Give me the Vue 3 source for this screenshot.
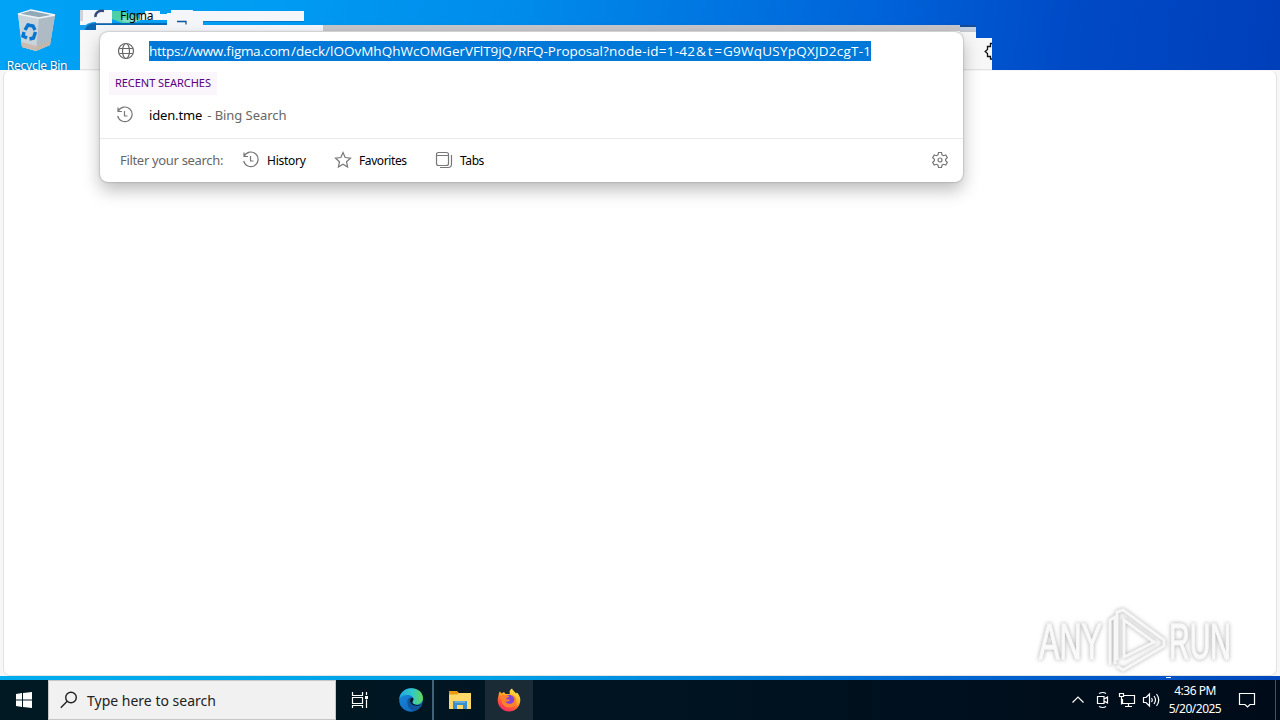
<template>
  <div class="screen">
    <main class="desktop">
      <div class="recycle">
        <svg width="40" height="44" viewBox="0 0 40 44">
          <path d="M1 5 14 1l24 5-5 30-14 6-14-4z" fill="#d5dde2" />
          <path d="M1 5 22 9l-3 33-14-4z" fill="#c8d3da" />
          <path d="M22 9 38 6l-5 30-14 6z" fill="#aebbc4" />
          <path d="M1 5 14 1l24 5-16 3z" fill="#8fa9b8" stroke="#f1f5f7" stroke-width="1.3" />
          <path d="m4.500 33 14.500 4 14.500-5-.5 4-14 6-14-4z" fill="#c9b5a4" opacity=".8" />
          <g fill="none" stroke="#0875d1" stroke-width="3.400">
            <path d="m8 21 3-5 5 1 2 4" />
            <path d="m18.500 23-2 6-4 1" />
            <path d="m10 29-4-2 1-4" />
          </g>
        </svg>
        <span>Recycle Bin</span>
      </div>

      <section class="page"><div class="page-body"></div></section>

      <div class="toolbar-left"></div>
      <div class="toolbar-step one"></div>
      <div class="toolbar-step two"></div>
      <div class="toolbar-right">
        <svg width="8" height="18" viewBox="0 0 8 18">
          <path d="M8 1.500H6.500V4.500H3.500V7.500L1.200 9.500l2.300 2v3h3v2.500H8" fill="none" stroke="#111" stroke-width="1.300" />
        </svg>
      </div>

      <div class="tab">
        <svg width="248" height="26" viewBox="0 0 248 26">
          <path d="M0 2h32v14H16v6H0zM65 3h15v3H65zM60 6h31v6H60zM91 2h22v1h111v10H123v9H87V5h4zM16 17h71v5H16z" fill="#f4f6f9" />
          <path d="M0 2h3v11H0z" fill="#cfd3d7" />
          <path d="M32 3h12l4 3h5l7 5v2h-5v2H42l-10-4z" fill="#4bd0ab" />
          <path d="M39 10h18v4H44z" fill="#79dbc9" />
          <path d="M16 16h71M97 13.500h9v3" fill="none" stroke="#0a56a0" stroke-width="1.300" />
          <path d="M123 13h101v1H123z" fill="#067cd0" />
          <path d="M15.500 9c-.5-4.500 3.500-7 8.500-6" fill="none" stroke="#344b79" stroke-width="2.500" />
          <path d="M0 17h6c1-1 4-3 10-3v8H0z" fill="#18a0ee" />
          <path d="M5 22c1-4 4-7 11-7v7z" fill="#0b66b4" />
        </svg>
        <span>Figma</span>
      </div>

      <section class="omnibox">
        <div class="address">
          <svg class="icon" viewBox="0 0 18 18">
            <g fill="none" stroke="#666" stroke-width="1.200">
              <circle cx="9" cy="9" r="7.500" />
              <ellipse cx="9" cy="9" rx="3.500" ry="7.500" />
              <path d="M2.200 6.500h13.600M2.200 11.500h13.600" />
            </g>
          </svg>
          <svg class="url" width="722" height="20" viewBox="0 0 722 20">
            <text
              v-for="part in urlParts"
              :key="part.x"
              :x="part.x"
              y="15"
              :textLength="part.width"
            >{{ part.text }}</text>
          </svg>
        </div>
        <div class="recent"><span>RECENT SEARCHES</span></div>
        <div class="suggestion">
          <svg class="icon" viewBox="0 0 18 18"><path :d="icons.history" /></svg>
          <span class="query">iden.tme</span>
          <span class="provider">- Bing Search</span>
        </div>
        <footer class="filters">
          <span class="filter-label">Filter your search:</span>
          <button v-for="filter in filters" :key="filter.name" :class="filter.icon">
            <svg class="icon" viewBox="0 0 18 18"><path :d="icons[filter.icon]" /></svg>
            <span>{{ filter.name }}</span>
          </button>
          <svg class="icon settings" viewBox="0 0 18 18">
            <path :d="icons.gear" />
            <circle cx="9" cy="9" r="2" />
          </svg>
        </footer>
      </section>

      <svg class="watermark" width="220" height="70" viewBox="0 0 220 70">
        <g class="mark">
          <text x="9" y="51" textLength="63" lengthAdjust="spacingAndGlyphs">ANY</text>
          <text x="139" y="51" textLength="62" lengthAdjust="spacingAndGlyphs">RUN</text>
          <path d="M80 57V12l5-3v47M87 52V4l6-2 41 30v6L93 62l-6-4M94 12v37l30-15z" />
        </g>
      </svg>
      <div class="edge-strip"><i></i></div>
    </main>

    <footer class="taskbar">
      <button class="start">
        <svg width="16" height="16" viewBox="0 0 16 16">
          <path d="m0 2 6-1v6.500H0zM7 1l9-1v7.500H7zM0 8.500h6V15l-6-1zM7 8.500h9V16l-9-1z" fill="#fff" />
        </svg>
      </button>
      <div class="search">
        <svg width="18" height="18" viewBox="0 0 18 18">
          <circle cx="11" cy="6.500" r="5.300" /><path d="M7.200 10.300.8 16.700" />
        </svg>
        <span>Type here to search</span>
      </div>
      <button class="tasks">
        <svg width="18" height="18" viewBox="0 0 18 18">
          <path d="M1.500 1v3.500h10V1M1.500 6.500h10v6h-10zM1.500 17v-2.500h10V17M15.500 1v3M15.500 8.500V17" fill="none" stroke="#fff" stroke-width="1.200" />
          <path d="M14 5h3v3h-3z" fill="#fff" />
        </svg>
      </button>
      <button class="edge">
        <svg width="24" height="24" viewBox="0 0 24 24">
          <defs>
            <linearGradient id="edgeTop" x2="1"><stop stop-color="#20a5dd" /><stop offset=".55" stop-color="#31c8ca" /><stop offset="1" stop-color="#63da54" /></linearGradient>
            <linearGradient id="edgeBase" y2="1"><stop stop-color="#188be0" /><stop offset="1" stop-color="#0e64b6" /></linearGradient>
          </defs>
          <circle cx="12" cy="12" r="11.800" fill="url(#edgeBase)" />
          <path d="M.3 11C1 4.500 6 .2 12.500.2 19 .2 24 4.500 24 10c0 4-3 6.500-6.500 6.500-2.500 0-4-1-4-2 0-.8 1-1.200 1-3C14.500 9 12 7 8.500 7 4.500 7 1.500 8.500.3 11z" fill="url(#edgeTop)" />
          <path d="M8.500 12c-1 5 2 10.500 7 11 3-.9 5.500-3 7-5.500-6 2.500-11.500-.5-11.500-5 0-1.500 1-2.500 2-3-2-.3-4 .5-4.500 2.500z" fill="#12539d" />
          <path d="M14.300 10.200c.5 2.300-1.800 3.300-.5 5 1.500 1.800 5.500 2.800 9.200.5-3 4-12 2.300-12-3 0-2.500 2.300-3.800 3.300-2.500z" fill="#041822" />
        </svg>
      </button>
      <button class="files">
        <svg width="22" height="18" viewBox="0 0 22 18">
          <path d="M0 0h8l2 2h12v4H0z" fill="#e99b14" />
          <path d="M0 3.500h8L10 2h12v16H0z" fill="#ffd869" />
          <path d="M4 10h14v8h-4v-4H8v4H4z" fill="#398ecb" />
          <path d="M5 10h12l-1 2H6z" fill="#62acd9" />
        </svg>
      </button>
      <button class="firefox">
        <svg width="24" height="24" viewBox="0 0 24 24">
          <defs>
            <linearGradient id="fox" x1=".8" x2=".25" y2="1"><stop stop-color="#fff04e" /><stop offset=".42" stop-color="#ffad25" /><stop offset=".7" stop-color="#ff553b" /><stop offset="1" stop-color="#ed286c" /></linearGradient>
          </defs>
          <path d="M1.500 8c0-2 .5-3.500 1.500-4.500l1.500 2L7 4l1.500 2H13c-1-2.500 0-4.500 2-5.500.5 2 3 3 4 5l1-1c2 2 3.500 5 3.300 8C23 19 18 23.500 12 23.500S.7 18.500.7 12.500c0-2 .3-3.500.8-4.500z" fill="url(#fox)" />
          <circle cx="12.500" cy="12" r="5.300" fill="#8044d8" />
          <path d="M5 7c3-1 4 1 7 1 0 2-3 1.500-3 3 2 1 3 0 4 1-1 2-4 2-5 1 2 4 8 3.500 9 0 1-3-1-5-3-6 4 0 6 4 5 8-2 6-11 6-14 0-1-3-1-6 0-8z" fill="#ff812d" />
        </svg>
      </button>
      <div class="tray">
        <svg class="chevron" width="14" height="16" viewBox="0 0 14 16"><path d="m1.500 10.500 5.500-5.500 5.500 5.500" /></svg>
        <svg class="camera" width="14" height="18" viewBox="0 0 14 18"><path d="M3 2.500q4-2 7 0M3 15.500q4 2 7 0M1.500 5.500h6.500v7H1.500zM8 8l3.500-2v6L8 10" /></svg>
        <svg class="network" width="18" height="16" viewBox="0 0 18 16"><path d="M6 3.500h10.500v8H4.500V7M1.500 1.500h4v3h-4zM3.500 4.500v8M10.500 11.500v3M7 14.500h7" /></svg>
        <svg class="sound" width="18" height="16" viewBox="0 0 18 16"><path d="M1.500 5.500h2.500L7.500 2v12L4 10.500H1.500zM9.500 6q1.500 2 0 4M12 4q3 4 0 8M14.500 2q4.500 6 0 12" /></svg>
        <div class="clock"><span>4:36 PM</span><span>5/20/2025</span></div>
        <svg class="notice" width="18" height="18" viewBox="0 0 18 18"><path d="M1.500 2.500h15v11H12L9.500 16 7 13.500H1.500z" /></svg>
        <i class="show-desktop"></i>
      </div>
    </footer>
  </div>
</template>

<script setup>
const urlParts = [
  { text: "https://www.figma.com", x: 0, width: 141 },
  { text: "/deck/", x: 142, width: 39 },
  { text: "lOOvMhQhWcOMGer", x: 181, width: 135 },
  { text: "VFlT9jQ", x: 316, width: 47 },
  { text: "/RFQ-Proposal", x: 364, width: 90 },
  { text: "?node-id=1-42", x: 454, width: 92 },
  { text: "&t=", x: 547, width: 26 },
  { text: "G9WqUSYpQXJD2cgT-1", x: 574, width: 148 },
];

const filters = [
  { name: "History", icon: "history" },
  { name: "Favorites", icon: "star" },
  { name: "Tabs", icon: "tabs" },
];

const icons = {
  history: "M2 1.500v4h4M2.300 5A7.300 7.300 0 1 1 1.700 10M8.500 5v5h3",
  star: "M9 1.500 11.200 6.500l5.300.6-4 3.600 1.100 5.300L9 13.300 4.400 16l1.100-5.300-4-3.600 5.300-.6z",
  tabs: "M3.500 1.500h8q2 0 2 2v9q0 2-2 2h-8q-2 0-2-2v-9q0-2 2-2M1.500 4.500h12M16.500 4v9q0 3.500-3.500 3.500H5",
  gear: "M7.500 1.500h3l.5 2.300 1.500.9 2.300-.7 1.500 2.600L14.600 8.200v1.600l1.700 1.600-1.500 2.600-2.300-.7-1.500.9-.5 2.300h-3L7 14.200l-1.500-.9-2.300.7-1.500-2.600 1.700-1.600V8.200L1.700 6.600 3.200 4l2.300.7L7 3.800z",
};
</script>

<style scoped>
.screen {
  width: 1280px;
  height: 720px;
  display: flex;
  flex-direction: column;
  overflow: hidden;
  font-family: "Noto Sans", "Open Sans", sans-serif;
}

.desktop {
  position: relative;
  height: 680px;
  background: linear-gradient(98deg, #00a3f5 0, #009df3 18%, #008bea 38%, #0063d9 64%, #004ac6 78%, #003ab5 100%);
}

button {
  display: flex;
  align-items: center;
  justify-content: center;
  padding: 0;
  border: none;
  background: transparent;
  font-family: inherit;
}

svg {
  display: block;
  flex-shrink: 0;
}

.recycle {
  position: absolute;
  left: 0;
  top: 9px;
  width: 74px;
  display: flex;
  flex-direction: column;
  align-items: center;
  color: white;
  font-size: 12px;
  line-height: 16px;
  letter-spacing: -0.25px;
  text-shadow: 0 1px 2px #004c86;
}

.recycle span {
  margin-top: 5px;
  white-space: nowrap;
}

.page {
  position: absolute;
  top: 70px;
  left: 0;
  width: 1280px;
  height: 606px;
  box-sizing: border-box;
  padding: 0 3px;
  background: #f7f7f7;
}

.page-body {
  height: 606px;
  box-sizing: border-box;
  border: 1px solid #e3e3e3;
  border-top-color: #f5f5f5;
  border-radius: 7px;
  background: white;
}

.edge-strip {
  position: absolute;
  left: 0;
  top: 676px;
  width: 1280px;
  height: 4px;
  background: linear-gradient(90deg, #00adef, #00a2e8 38%, #0069d4 72%, #0048bc);
}

.edge-strip i {
  display: block;
  width: 5px;
  height: 1px;
  margin: 1px 0 0 1166px;
  background: white;
}

.tab {
  position: absolute;
  left: 80px;
  top: 8px;
}

.tab span {
  position: absolute;
  left: 40px;
  top: 0;
  font-size: 12px;
  line-height: 16px;
  letter-spacing: -0.3px;
}

.toolbar-left {
  position: absolute;
  left: 80px;
  top: 25px;
  width: 880px;
  height: 45px;
  box-sizing: border-box;
  border-bottom: 1px solid #e3e3e3;
  background: linear-gradient(90deg, #f4f6f9 243px, #c5c5ca 243px) 0 0 / 100% 6px no-repeat #f7f7f7;
}

.toolbar-step {
  position: absolute;
  left: 960px;
  top: 27px;
  width: 16px;
  height: 43px;
  background: linear-gradient(#bed0e2 3px, #c5c8cc 3px, #c5c8cc 5px, #f7f7f7 5px);
}

.toolbar-step.two {
  top: 25px;
  height: 2px;
  background: #174a95;
}

.toolbar-right {
  position: absolute;
  left: 960px;
  top: 38px;
  width: 32px;
  height: 32px;
  box-sizing: border-box;
  padding: 4px 0 0 24px;
  background: #f7f7f7;
  border-bottom: 1px solid #e3e3e3;
}

.omnibox {
  position: absolute;
  left: 100px;
  top: 32px;
  width: 863px;
  height: 150px;
  display: flex;
  flex-direction: column;
  border-radius: 8px;
  background: white;
  box-shadow: 0 0 2px #888, 0 8px 17px #0004;
}

.icon {
  width: 18px;
  height: 18px;
  fill: none;
  stroke: #777;
  stroke-width: 1.2;
}

.address {
  height: 38px;
  display: flex;
  align-items: center;
  padding-left: 17px;
  gap: 14px;
}

.url {
  background: #0078d7;
  fill: white;
  font-size: 13.5px;
  font-family: "Open Sans", "Noto Sans", sans-serif;
}

.recent {
  height: 26px;
  padding-left: 9px;
}

.recent span {
  display: block;
  width: 108px;
  height: 23px;
  box-sizing: border-box;
  padding-left: 6px;
  margin-top: 2px;
  background: #faf6fc;
  color: #590083;
  font-size: 11px;
  line-height: 22px;
  letter-spacing: -0.05px;
  white-space: nowrap;
}

.suggestion {
  height: 42px;
  box-sizing: border-box;
  display: flex;
  align-items: center;
  padding: 0 0 4px 16px;
  font-size: 13px;
}

.query {
  margin-left: 15px;
  letter-spacing: -0.15px;
}

.provider {
  margin-left: 5px;
  color: #666;
  letter-spacing: -0.05px;
}

.filters {
  height: 44px;
  box-sizing: border-box;
  border-top: 1px solid #e9e9e9;
  display: flex;
  align-items: center;
  padding: 0 14px 1px 20px;
}

.filter-label {
  width: 122px;
  color: #666;
  font-size: 13px;
  letter-spacing: -0.32px;
  white-space: nowrap;
}

.filters button {
  justify-content: flex-start;
  gap: 7px;
  font-size: 12px;
  letter-spacing: -0.4px;
}

.filters .history {
  width: 92px;
  letter-spacing: -0.25px;
}

.filters .star {
  width: 101px;
}

.settings {
  margin-left: auto;
}

.watermark {
  position: absolute;
  left: 1030px;
  top: 608px;
  filter: drop-shadow(0 0 2px #aaa);
}

.mark {
  fill: #fafafa;
  stroke: #f7f7f7;
  stroke-width: 1.5;
  font-family: "Liberation Sans", sans-serif;
  font-size: 50px;
}

.mark path {
  fill: none;
  stroke: #f7f7f7;
  stroke-width: 3;
}

.taskbar {
  height: 40px;
  display: flex;
  background: linear-gradient(90deg, #001922, #001421 50%, #000b19);
}

.start {
  width: 48px;
}

.search {
  width: 288px;
  height: 40px;
  box-sizing: border-box;
  border: 1px solid #c6c6c6;
  display: flex;
  align-items: center;
  padding-left: 11px;
  gap: 9px;
  background: #f1f1f1;
  color: #222;
  font-size: 14px;
}

.search svg {
  fill: none;
  stroke: #222;
  stroke-width: 1.4;
}

.tasks {
  width: 48px;
}

.edge {
  width: 50px;
  box-sizing: border-box;
  padding-left: 6px;
  border-right: 2px solid #426377;
}

.files {
  width: 51px;
}

.firefox {
  width: 48px;
  background: #1b2b36;
}

.tray {
  margin-left: auto;
  width: 209px;
  display: flex;
  align-items: center;
}

.tray > svg {
  fill: none;
  stroke: white;
  stroke-width: 1.2;
}

.camera {
  margin-left: 11px;
}

.network {
  margin-left: 8px;
}

.sound {
  margin-left: 6px;
}

.clock {
  width: 70px;
  height: 36px;
  display: flex;
  flex-direction: column;
  align-items: center;
  color: white;
  font-size: 12px;
  line-height: 18px;
  letter-spacing: -0.5px;
}

.notice {
  margin-left: 8px;
}

.show-desktop {
  width: 1px;
  height: 40px;
  margin-left: 19px;
  background: #47515c;
}
</style>
